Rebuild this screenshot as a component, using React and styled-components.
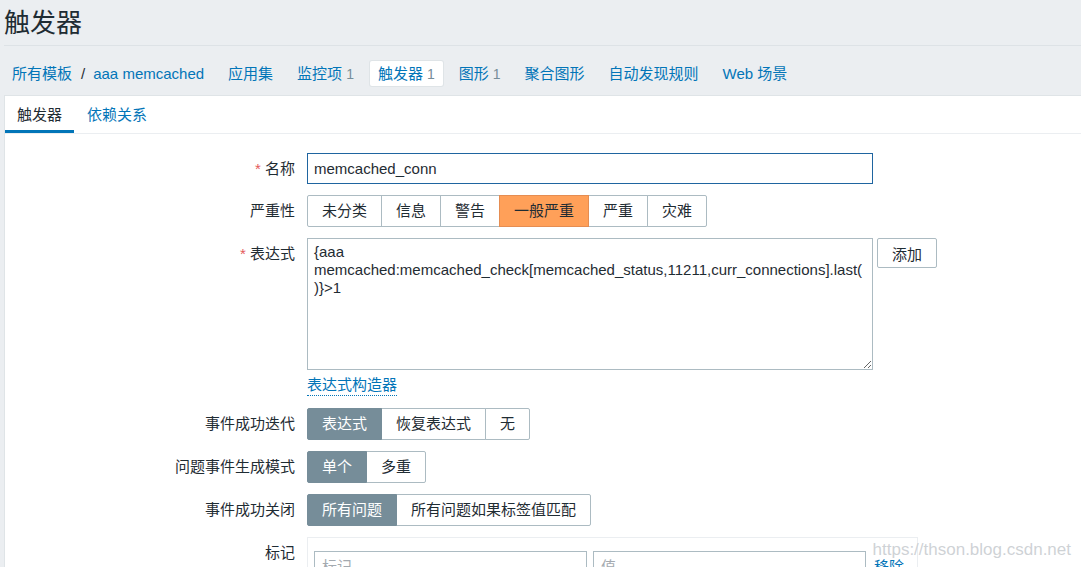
import React from "react";
import styled, { createGlobalStyle } from "styled-components";

const GlobalStyle = createGlobalStyle`
body{
    margin: 0;
    background-color: #ebeef1;
    font-family: "Liberation Sans", Arial, "Noto Sans CJK SC", sans-serif;
    color: #1f2c33;
    overflow: hidden;
}
`

const navItems = [
    { name: "应用集" },
    { name: "监控项", count: 1 },
    { name: "触发器", count: 1, selected: true },
    { name: "图形", count: 1 },
    { name: "聚合图形" },
    { name: "自动发现规则" },
    { name: "Web 场景" },
];

const severities = ["未分类", "信息", "警告", "一般严重", "严重", "灾难"];

const expression = "{aaa\nmemcached:memcached_check[memcached_status,11211,curr_connections].last(\n)}>1";

function Segmented({ options, selected, kind }) {
    return (
        <SegGroup>
            {options.map(opt => (
                <Seg key={opt} $active={opt === selected} $kind={kind}>{opt}</Seg>
            ))}
        </SegGroup>
    )
}

export default function App() {
    return (
        <Page>
            <GlobalStyle />
            <Header>
                <Title>触发器</Title>
            </Header>

            <Nav>
                <NavItem>
                    所有模板<Slash>/</Slash>aaa memcached
                </NavItem>
                {navItems.map(item => (
                    <NavItem key={item.name} $selected={item.selected}>
                        {item.name}
                        {item.count && <Count>{item.count}</Count>}
                    </NavItem>
                ))}
            </Nav>

            <Panel>
                <TabBar>
                    <Tab $active>触发器</Tab>
                    <Tab>依赖关系</Tab>
                </TabBar>

                <Form>
                    <Label><Star>*</Star> 名称</Label>
                    <Field>
                        <TextInput defaultValue="memcached_conn" />
                    </Field>

                    <Label $tall>严重性</Label>
                    <Field>
                        <Segmented options={severities} selected="一般严重" kind="severity" />
                    </Field>

                    <Label><Star>*</Star> 表达式</Label>
                    <Field>
                        <ExprWrap>
                            <ExprColumn>
                                <ExprArea defaultValue={expression} spellCheck={false} />
                                <BuilderLink>表达式构造器</BuilderLink>
                            </ExprColumn>
                            <AddButton>添加</AddButton>
                        </ExprWrap>
                    </Field>

                    <Label $tall>事件成功迭代</Label>
                    <Field>
                        <Segmented options={["表达式", "恢复表达式", "无"]} selected="表达式" />
                    </Field>

                    <Label $tall>问题事件生成模式</Label>
                    <Field>
                        <Segmented options={["单个", "多重"]} selected="单个" />
                    </Field>

                    <Label $tall>事件成功关闭</Label>
                    <Field>
                        <Segmented options={["所有问题", "所有问题如果标签值匹配"]} selected="所有问题" />
                    </Field>

                    <Label $tall>标记</Label>
                    <Field>
                        <TagBox>
                            <TagInput placeholder="标记" />
                            <TagInput placeholder="值" />
                            <RemoveLink>移除</RemoveLink>
                        </TagBox>
                    </Field>
                </Form>
            </Panel>

            <Watermark>https://thson.blog.csdn.net</Watermark>
        </Page>
    )
}

const Page = styled.div`
position: relative;
height: 567px;
overflow: hidden;
font-size: 15px;
`
const Header = styled.div`
height: 45px;
margin-left: 4px;
display: flex;
align-items: center;
border-bottom: 1px solid #dde2e6;
`
const Title = styled.h1`
margin: 0;
font-size: 26px;
font-weight: 400;
line-height: 30px;
color: #1f2c33;
`
const Nav = styled.div`
display: flex;
align-items: center;
gap: 8px;
padding: 15px 0 9px 4px;
`
const NavItem = styled.div`
height: 25px;
line-height: 25px;
padding: 0 8px;
color: #0275b8;
white-space: nowrap;
border-radius: 2px;
box-sizing: border-box;
background-color: ${p => p.$selected ? "#fff" : "transparent"};
box-shadow: ${p => p.$selected ? "0 0 0 1px #dfe4e7" : "none"};
`
const Slash = styled.span`
color: #1f2c33;
margin: 0 8px 0 9px;
`
const Count = styled.span`
color: #768d99;
margin-left: 4px;
font-size: 14px;
`
const Panel = styled.div`
margin-left: 4px;
background-color: #fff;
border-left: 1px solid #dfe4e7;
border-top: 1px solid #dfe4e7;
height: 100%;
`
const TabBar = styled.div`
display: flex;
border-bottom: 1px solid #ebeef1;
`
const Tab = styled.div`
padding: 9px 12px 5px;
line-height: 20px;
border-bottom: 3px solid ${p => p.$active ? "#0275b8" : "transparent"};
color: ${p => p.$active ? "#1f2c33" : "#0275b8"};
margin-right: 1px;
`
const Form = styled.div`
display: grid;
grid-template-columns: 290px 1fr;
column-gap: 12px;
row-gap: 11px;
padding-top: 19px;
`
const Label = styled.div`
text-align: right;
line-height: ${p => p.$tall ? "32px" : "31px"};
color: #1f2c33;
white-space: nowrap;
`
const Star = styled.span`
color: #e45959;
`
const Field = styled.div`
display: flex;
align-items: flex-start;
`
const TextInput = styled.input`
box-sizing: border-box;
width: 566px;
height: 31px;
padding: 0 6px;
border: 1px solid #1f65a0;
border-radius: 0;
font-family: inherit;
font-size: 15px;
color: #1f2c33;
outline: none;
`
const SegGroup = styled.div`
display: flex;
`
const Seg = styled.div`
box-sizing: border-box;
height: 32px;
line-height: 30px;
padding: 0 14px;
border: 1px solid ${p => p.$active ? (p.$kind === "severity" ? "#e58d52" : "#768d99") : "#acbbc2"};
margin-left: -1px;
position: relative;
z-index: ${p => p.$active ? 1 : 0};
white-space: nowrap;
background-color: ${p => p.$active ? (p.$kind === "severity" ? "#ffa059" : "#768d99") : "#fff"};
color: ${p => p.$active && p.$kind !== "severity" ? "#fff" : "#1f2c33"};
&:first-child{
    margin-left: 0;
    border-radius: 2px 0 0 2px;
}
&:last-child{
    border-radius: 0 2px 2px 0;
}
`
const ExprWrap = styled.div`
display: flex;
align-items: flex-start;
gap: 4px;
`
const ExprColumn = styled.div`
display: flex;
flex-direction: column;
align-items: flex-start;
padding-bottom: 1px;
`
const ExprArea = styled.textarea`
box-sizing: border-box;
width: 566px;
height: 132px;
margin: 0;
padding: 4px 6px;
border: 1px solid #acbbc2;
border-radius: 0;
font-family: inherit;
font-size: 15px;
line-height: 18px;
color: #1f2c33;
resize: vertical;
outline: none;
white-space: pre;
overflow: hidden;
display: block;
`
const BuilderLink = styled.span`
margin-top: 5px;
line-height: 20px;
color: #0275b8;
border-bottom: 1px dotted #0275b8;
`
const AddButton = styled.button`
box-sizing: border-box;
width: 60px;
height: 30px;
background-color: #fff;
border: 1px solid #acbbc2;
border-radius: 2px;
font-family: inherit;
font-size: 15px;
color: #1f2c33;
padding: 0;
`
const TagBox = styled.div`
box-sizing: border-box;
width: 611px;
height: 60px;
padding: 13px 0 0 6px;
border: 1px solid #ebeef1;
display: flex;
gap: 6px;
align-items: flex-start;
`
const TagInput = styled.input`
box-sizing: border-box;
width: 273px;
height: 31px;
padding: 0 7px;
border: 1px solid #acbbc2;
font-family: inherit;
font-size: 15px;
color: #1f2c33;
outline: none;
&::placeholder{
    color: #a4aab0;
}
`
const RemoveLink = styled.span`
margin-left: 2px;
line-height: 31px;
color: #0275b8;
`
const Watermark = styled.div`
position: absolute;
right: 10px;
bottom: 7px;
font-size: 17px;
color: rgba(190, 195, 200, 0.75);
text-shadow: 0 0 1px rgba(255, 255, 255, 0.8);
pointer-events: none;
`
